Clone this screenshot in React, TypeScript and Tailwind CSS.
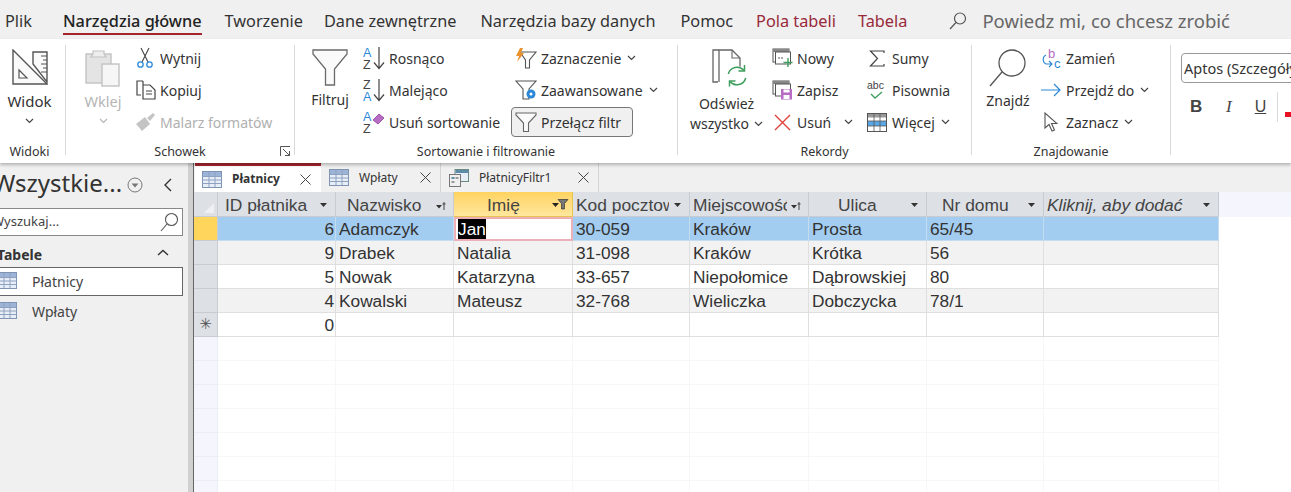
import React from 'react';

const ui = { fontFamily: '"Noto Sans", "Open Sans", sans-serif' };
const cellFont = { fontFamily: '"Liberation Sans", Arial, sans-serif' };

const Chevron = ({ className = '', color = '#444' }: { className?: string; color?: string }) => (
  <svg width="9" height="6" viewBox="0 0 9 6" className={className}>
    <path d="M1 1 L4.5 4.5 L8 1" fill="none" stroke={color} strokeWidth="1.2" />
  </svg>
);

const TableIcon = ({ w = 20, h = 17 }: { w?: number; h?: number }) => (
  <svg width={w} height={h} viewBox="0 0 20 17" className="shrink-0">
    <rect x="0.5" y="0.5" width="19" height="16" fill="#e8eef8" stroke="#7f93b2" />
    <rect x="1" y="1" width="18" height="4" fill="#9db4d6" />
    <path d="M0.5 5.5H19.5M0.5 9H19.5M0.5 12.5H19.5M7 1V16M13 1V16" stroke="#8ea2c0" strokeWidth="1" />
  </svg>
);

const FunnelBig = () => (
  <svg width="36" height="38" viewBox="0 0 36 38">
    <path d="M1 1H35V5L22.5 20V36H13.5V20L1 5Z" fill="#fafafa" stroke="#6a6a6a" strokeWidth="1.3" />
  </svg>
);

const FunnelSmall = () => (
  <svg width="22" height="22" viewBox="0 0 22 22">
    <path d="M1 2H21V4L13.5 12V20.5H8.5V12L1 4Z" fill="#fafafa" stroke="#666" strokeWidth="1.1" />
  </svg>
);

const AZ = ({ top, bottom, topColor, bottomColor }: { top: string; bottom: string; topColor: string; bottomColor: string }) => (
  <svg width="22" height="24" viewBox="0 0 22 24">
    <text x="0" y="10.5" fontSize="12.5" fontFamily="Liberation Sans" fill={topColor}>{top}</text>
    <text x="0" y="22.5" fontSize="12.5" fontFamily="Liberation Sans" fill={bottomColor}>{bottom}</text>
    <path d="M16 1V22M11 16.5L16 22.5L21 16.5" fill="none" stroke="#444" strokeWidth="1.2" />
  </svg>
);

const Small = ({ icon, label, chevron, disabled, w }: { icon: React.ReactNode; label: string; chevron?: boolean; disabled?: boolean; w?: string }) => (
  <div className={`flex h-8 items-center ${w ?? ''}`}>
    <div className="flex h-[22px] w-[22px] shrink-0 items-center justify-center">{icon}</div>
    <span className={`ml-[4px] whitespace-nowrap text-[14px] ${disabled ? 'text-[#b0b0b0]' : 'text-[#333]'}`}>{label}</span>
    {chevron && <Chevron className="ml-[6px]" />}
  </div>
);

const GroupLabel = ({ children, right = 'right-0' }: { children: React.ReactNode; right?: string }) => (
  <div className={`absolute bottom-[1px] left-0 text-center text-[12.5px] text-[#333] ${right}`}>{children}</div>
);

const Divider = () => <div className="mt-[6px] h-[110px] w-px shrink-0 bg-[#d9d9d9]" />;

const Tabs = [
  { label: 'Plik', cls: 'ml-[5px] text-[#333]' },
  { label: 'Narzędzia główne', cls: 'ml-[31px] font-medium text-[#222]', active: true },
  { label: 'Tworzenie', cls: 'ml-[23px] text-[#333]' },
  { label: 'Dane zewnętrzne', cls: 'ml-[21px] text-[#333]' },
  { label: 'Narzędzia bazy danych', cls: 'ml-[24px] text-[#333]' },
  { label: 'Pomoc', cls: 'ml-[25px] text-[#333]' },
  { label: 'Pola tabeli', cls: 'ml-[23px] text-[#98283a]' },
  { label: 'Tabela', cls: 'ml-[22px] text-[#98283a]' },
];

const TopBar = () => (
  <div className="flex h-[39px] items-start bg-[#f0f0f0]" style={ui}>
    {Tabs.map((t) => (
      <div key={t.label} className={`relative h-[39px] whitespace-nowrap pt-[8px] text-[16.3px] leading-[26px] ${t.cls}`}>
        {t.label}
        {t.active && <div className="absolute bottom-[4px] left-0 right-0 h-[2px] bg-[#a4262c]" />}
      </div>
    ))}
    <svg width="20" height="20" viewBox="0 0 20 20" className="ml-[41px] mt-[11px] shrink-0">
      <circle cx="12" cy="7.5" r="5.5" fill="none" stroke="#555" strokeWidth="1.2" />
      <path d="M8 11.5L2 18" stroke="#555" strokeWidth="1.2" />
    </svg>
    <div className="ml-[14px] whitespace-nowrap pt-[8px] text-[18.5px] leading-[26px] text-[#666]">Powiedz mi, co chcesz zrobić</div>
  </div>
);

const Ribbon = () => (
  <div className="relative z-10 flex h-[124px] overflow-hidden bg-white shadow-[0_2px_3px_rgba(0,0,0,0.25)]" style={ui}>
    {/* Widoki */}
    <div className="relative flex w-[65px] shrink-0 flex-col items-center pr-[6px] pt-[10px]">
      <svg width="36" height="36" viewBox="0 0 36 36">
        <path d="M1 1L35 35H1Z" fill="#fafafa" stroke="#555" strokeWidth="1.4" />
        <path d="M7 21L15 29H7Z" fill="#fff" stroke="#555" strokeWidth="1.2" />
        <path d="M21 15V3H35V33Z" fill="#fafafa" stroke="#555" strokeWidth="1.4" />
        <path d="M29 7H35M31 11H35M29 15H35M31 19H35M29 23H35" stroke="#555" strokeWidth="1.1" />
      </svg>
      <div className="mt-[4px] text-[15px] leading-[24px] text-[#333]">Widok</div>
      <Chevron className="mt-[5px]" />
      <GroupLabel right="right-[6px]">Widoki</GroupLabel>
    </div>
    <Divider />
    {/* Schowek */}
    <div className="relative flex w-[228px] shrink-0 pl-[11px]">
      <div className="flex w-[52px] flex-col items-center pt-[10px] text-[#b5b5b5]">
        <svg width="36" height="38" viewBox="0 0 36 38">
          <rect x="1" y="5" width="25" height="29" fill="#e4e4e4" stroke="#c2c2c2" strokeWidth="1.4" />
          <path d="M8 5V2H19V5L21 8H6Z" fill="#eee" stroke="#c2c2c2" strokeWidth="1.2" />
          <rect x="17" y="15" width="17" height="22" fill="#f6f6f6" stroke="#c2c2c2" strokeWidth="1.4" />
        </svg>
        <div className="mt-[2px] text-[14.5px] leading-[24px]">Wklej</div>
        <Chevron className="mt-[5px]" color="#b5b5b5" />
      </div>
      <div className="ml-[5px] mt-[3px] flex flex-col">
        <Small
          label="Wytnij"
          icon={
            <svg width="18" height="22" viewBox="0 0 18 22">
              <path d="M5 1L12 15M13 1L6 15" stroke="#444" strokeWidth="1.1" fill="none" />
              <circle cx="4.5" cy="17.5" r="2.7" fill="none" stroke="#2b88d8" strokeWidth="1.3" />
              <circle cx="13.5" cy="17.5" r="2.7" fill="none" stroke="#2b88d8" strokeWidth="1.3" />
            </svg>
          }
        />
        <Small
          label="Kopiuj"
          icon={
            <svg width="21" height="20" viewBox="0 0 21 20">
              <path d="M8 1H2V15H6" fill="none" stroke="#444" strokeWidth="1.2" />
              <path d="M8 1V3M8 5H15L20 10V19H8V3" fill="#fff" stroke="#444" strokeWidth="1.2" />
              <path d="M11 11H17M11 14H17" stroke="#444" strokeWidth="1" />
            </svg>
          }
        />
        <Small
          label="Malarz formatów"
          disabled
          icon={
            <svg width="21" height="20" viewBox="0 0 21 20">
              <path d="M1 12L10 5L15 12L7 19Z" fill="#c4c4c4" />
              <path d="M12 6L18 1L20 3L15 9Z" fill="#c4c4c4" />
            </svg>
          }
        />
      </div>
      <GroupLabel>Schowek</GroupLabel>
      <svg width="11" height="11" viewBox="0 0 11 11" className="absolute bottom-[6px] right-[3px]">
        <path d="M0.5 10V0.5H10M3 3L9.5 9.5M9.5 5V9.5H5" fill="none" stroke="#555" strokeWidth="1" />
      </svg>
    </div>
    <Divider />
    {/* Sortowanie */}
    <div className="relative flex w-[382px] shrink-0 pl-[17px]">
      <div className="flex w-[36px] flex-col items-center pt-[10px]">
        <FunnelBig />
        <div className="mt-[1px] text-[14px] leading-[24px] text-[#333]">Filtruj</div>
      </div>
      <div className="ml-[15px] mt-[3px] flex w-[152px] shrink-0 flex-col">
        <Small label="Rosnąco" icon={<AZ top="A" bottom="Z" topColor="#2b88d8" bottomColor="#444" />} />
        <Small label="Malejąco" icon={<AZ top="Z" bottom="A" topColor="#444" bottomColor="#2b88d8" />} />
        <Small
          label="Usuń sortowanie"
          icon={
            <svg width="22" height="24" viewBox="0 0 22 24">
              <text x="0" y="10.5" fontSize="12.5" fontFamily="Liberation Sans" fill="#2b88d8">A</text>
              <text x="0" y="22.5" fontSize="12.5" fontFamily="Liberation Sans" fill="#444">Z</text>
              <path d="M10 10L16 4L21 8L15 14Z" fill="#b86cc4" stroke="#8a3d99" strokeWidth="0.8" />
            </svg>
          }
        />
      </div>
      <div className="mt-[3px] flex flex-col">
        <Small
          label="Zaznaczenie"
          chevron
          icon={
            <svg width="22" height="22" viewBox="0 0 22 22">
              <path d="M5 5H21L14.5 13V21H10.5V13Z" fill="#fff" stroke="#555" strokeWidth="1.1" />
              <path d="M5 1L1 9H4L2 15L9 6H6L8 1Z" fill="#e8912d" />
            </svg>
          }
        />
        <Small
          label="Zaawansowane"
          chevron
          icon={
            <svg width="22" height="22" viewBox="0 0 22 22">
              <path d="M1 2H21L14 10V20H8V10Z" fill="#fff" stroke="#555" strokeWidth="1.1" />
              <circle cx="16" cy="15" r="4.5" fill="#2b88d8" />
              <circle cx="16" cy="15" r="1.5" fill="#fff" />
            </svg>
          }
        />
        <div className="-ml-[4px] mt-[1px] flex h-[30px] w-[122px] items-center rounded-[4px] border border-[#777] bg-[#f0f0f0] pl-[3px]">
          <FunnelSmall />
          <span className="ml-[4px] whitespace-nowrap text-[14px] text-[#333]">Przełącz filtr</span>
        </div>
      </div>
      <GroupLabel>Sortowanie i filtrowanie</GroupLabel>
    </div>
    <Divider />
    {/* Rekordy */}
    <div className="relative flex w-[293px] shrink-0 pl-[4px]">
      <div className="flex w-[89px] shrink-0 flex-col items-center pt-[10px]">
        <svg width="36" height="38" viewBox="0 0 36 38" className="ml-[6px]">
          <path d="M7 1H1V33H6" fill="none" stroke="#666" strokeWidth="1.3" />
          <path d="M7 33V1H20L28 9V18" fill="none" stroke="#666" strokeWidth="1.3" />
          <path d="M20 1V9H28" fill="none" stroke="#666" strokeWidth="1.1" />
          <circle cx="25" cy="27" r="10" fill="#fff" />
          <path d="M16.3 25A9 9 0 0 1 32 21.5M33.7 29A9 9 0 0 1 18 32.5" fill="none" stroke="#3f9e5d" strokeWidth="1.5" />
          <path d="M32.5 16V22H26.5M17.5 37.5V32H23.5" fill="none" stroke="#3f9e5d" strokeWidth="1.5" />
        </svg>
        <div className="mt-[7px] text-[14px] leading-[20px] text-[#333]">Odśwież</div>
        <div className="flex items-center text-[14px] leading-[20px] text-[#333]">
          wszystko
          <Chevron className="ml-[5px]" />
        </div>
      </div>
      <div className="mt-[3px] flex w-[95px] shrink-0 flex-col">
        <Small
          label="Nowy"
          icon={
            <svg width="21" height="20" viewBox="0 0 21 20">
              <rect x="1" y="1" width="16" height="13" fill="#fff" stroke="#555" />
              <rect x="1" y="1" width="16" height="3" fill="#888" />
              <rect x="3.5" y="4" width="15" height="12" fill="#fff" stroke="#555" />
              <path d="M6 10H12" stroke="#555" strokeDasharray="2 1" />
              <path d="M16 10V19M11.5 14.5H20.5" stroke="#3f9e5d" strokeWidth="1.4" />
            </svg>
          }
        />
        <Small
          label="Zapisz"
          icon={
            <svg width="21" height="20" viewBox="0 0 21 20">
              <rect x="1" y="1" width="16" height="13" fill="#fff" stroke="#555" />
              <rect x="1" y="1" width="16" height="3" fill="#888" />
              <rect x="3.5" y="4" width="15" height="12" fill="#fff" stroke="#555" />
              <rect x="9" y="9" width="11" height="10.5" fill="#b86cc4" />
              <rect x="11.5" y="9.5" width="6" height="3" fill="#fff" />
              <rect x="11.5" y="15" width="6" height="4" fill="#fff" />
            </svg>
          }
        />
        <div className="flex h-8 items-center">
          <div className="flex h-[22px] w-[22px] shrink-0 items-center justify-center">
            <svg width="17" height="17" viewBox="0 0 17 17">
              <path d="M1 1L16 16M16 1L1 16" stroke="#e0413a" strokeWidth="1.4" />
            </svg>
          </div>
          <span className="ml-[4px] text-[14px] text-[#333]">Usuń</span>
          <Chevron className="ml-[13px]" />
        </div>
      </div>
      <div className="mt-[3px] flex flex-col">
        <Small
          label="Sumy"
          icon={<svg width="17" height="17" viewBox="0 0 17 17"><path d="M15 3V1H1.5L8.5 8.5L1.5 16H15V14" fill="none" stroke="#444" strokeWidth="1.2" /></svg>}
        />
        <Small
          label="Pisownia"
          icon={
            <svg width="20" height="22" viewBox="0 0 20 22">
              <text x="0" y="10" fontSize="10.5" fontFamily="Liberation Sans" fill="#444">abc</text>
              <path d="M4 15L8 19L15 13" fill="none" stroke="#3f9e5d" strokeWidth="1.3" />
            </svg>
          }
        />
        <Small
          label="Więcej"
          chevron
          icon={
            <svg width="20" height="19" viewBox="0 0 20 19">
              <rect x="0.5" y="0.5" width="19" height="18" fill="#fff" stroke="#555" />
              <rect x="1" y="1" width="18" height="3.5" fill="#999" />
              <rect x="1" y="8" width="18" height="5" fill="#5ba6e4" />
              <path d="M7 1V18M13 1V18M1 8H19M1 13H19" stroke="#555" strokeWidth="0.8" />
            </svg>
          }
        />
      </div>
      <GroupLabel>Rekordy</GroupLabel>
    </div>
    <Divider />
    {/* Znajdowanie */}
    <div className="relative flex w-[198px] shrink-0 pl-[13px]">
      <div className="flex w-[46px] shrink-0 flex-col items-center pt-[10px]">
        <svg width="38" height="38" viewBox="0 0 38 38">
          <circle cx="23" cy="14" r="13" fill="#fff" stroke="#555" strokeWidth="1.3" />
          <path d="M13 23L1 37" stroke="#555" strokeWidth="1.3" />
        </svg>
        <div className="mt-[4px] text-[14px] leading-[20px] text-[#333]">Znajdź</div>
      </div>
      <div className="ml-[9px] mt-[3px] flex flex-col">
        <Small
          label="Zamień"
          icon={
            <svg width="21" height="23" viewBox="0 0 21 23">
              <text x="7" y="11" fontSize="13" fontFamily="Liberation Sans" fill="#b06cc0">b</text>
              <text x="13" y="21" fontSize="13" fontFamily="Liberation Sans" fill="#2b88d8">c</text>
              <path d="M5 8A5 5 0 0 0 5 17H11M8 14L11 17L8 20" fill="none" stroke="#2b88d8" strokeWidth="1.1" />
            </svg>
          }
        />
        <Small
          label="Przejdź do"
          chevron
          icon={<svg width="20" height="14" viewBox="0 0 20 14"><path d="M0 7H19M13 1L19 7L13 13" fill="none" stroke="#2b88d8" strokeWidth="1.2" /></svg>}
        />
        <Small
          label="Zaznacz"
          chevron
          icon={<svg width="14" height="20" viewBox="0 0 14 20"><path d="M1 1V16L5 12.5L8 19L10.5 18L7.5 11.5H13Z" fill="#fff" stroke="#555" strokeWidth="1.1" /></svg>}
        />
      </div>
      <GroupLabel>Znajdowanie</GroupLabel>
    </div>
    <Divider />
    {/* Formatowanie */}
    <div className="flex min-w-0 flex-1 flex-col pl-[10px] pt-[14px]">
      <div className="h-[30px] w-[130px] shrink-0 overflow-hidden whitespace-nowrap rounded-l-[4px] border border-[#999] pl-[2px] text-[14.5px] leading-[28px] text-[#333]">
        Aptos (Szczegóły)
      </div>
      <div className="mt-[9px] flex items-center text-[#444]">
        <span className="ml-[9px] w-[11px] text-[17px] font-bold leading-[28px]" style={cellFont}>B</span>
        <span className="ml-[25px] w-[6px] text-[17px] italic leading-[28px]" style={{ fontFamily: '"Liberation Serif", serif' }}>I</span>
        <span className="ml-[23px] text-[16px] underline leading-[28px]" style={cellFont}>U</span>
        <div className="ml-[11px] h-[30px] w-px bg-[#d9d9d9]" />
        <div className="ml-[7px] mt-[14px] h-[5px] w-[10px] bg-[#e81123]" />
      </div>
    </div>
  </div>
);

const NavPane = () => (
  <div className="w-[188px] shrink-0 overflow-hidden bg-[#f0f0f0]" style={ui}>
    <div className="flex h-[45px] items-center">
      <span className="-ml-[7px] -mt-[5px] whitespace-nowrap text-[24px] leading-[32px] text-[#333]">Wszystkie...</span>
      <svg width="16" height="16" viewBox="0 0 16 16" className="-mt-[2px] ml-[5px] shrink-0">
        <circle cx="8" cy="8" r="7" fill="none" stroke="#777" />
        <path d="M4.5 6.5H11.5L8 10.5Z" fill="#777" />
      </svg>
      <svg width="9" height="14" viewBox="0 0 9 14" className="-mt-[2px] ml-[20px] shrink-0">
        <path d="M8 1L2 7L8 13" fill="none" stroke="#333" strokeWidth="1.4" />
      </svg>
    </div>
    <div className="-ml-[1px] flex h-[28px] w-[184px] items-center justify-between border border-[#888] bg-white">
      <span className="-ml-[8px] text-[13px] text-[#444]">Wyszukaj...</span>
      <svg width="20" height="20" viewBox="0 0 20 20" className="mr-[3px]">
        <circle cx="12.5" cy="7.5" r="6" fill="none" stroke="#555" strokeWidth="1.1" />
        <path d="M8 12L2 19" stroke="#555" strokeWidth="1.1" />
      </svg>
    </div>
    <div className="flex h-[31px] items-center justify-between pr-[19px] pt-[6px]">
      <span className="-ml-[3px] text-[14px] font-bold text-[#333]">Tabele</span>
      <svg width="12" height="7" viewBox="0 0 12 7" className="-mt-[4px]">
        <path d="M1 6L6 1.5L11 6" fill="none" stroke="#333" strokeWidth="1.4" />
      </svg>
    </div>
    <div className="-ml-[1px] flex h-[29px] w-[184px] items-center border border-[#666] bg-white">
      <div className="-ml-[3px] -mt-[2px]"><TableIcon /></div>
      <span className="ml-[15px] text-[14px] text-[#444]">Płatnicy</span>
    </div>
    <div className="flex h-[31px] items-center">
      <div className="-ml-[3px] -mt-[2px]"><TableIcon /></div>
      <span className="ml-[15px] text-[14px] text-[#444]">Wpłaty</span>
    </div>
  </div>
);

const DocTab = ({ label, active, icon, w, gap, pad, close }: { label: string; active?: boolean; icon: React.ReactNode; w: string; gap: string; pad: string; close: string }) => (
  <div className={`flex h-[29px] shrink-0 items-center ${pad} ${w} ${active ? 'border-t-[3px] border-[#a4262c] bg-white font-bold' : 'border-r border-[#d4d4d4] bg-[#f0f0f0]'}`}>
    {icon}
    <span className={`${gap} whitespace-nowrap text-[12px] text-[#333]`}>{label}</span>
    <svg width="11" height="11" viewBox="0 0 11 11" className={`ml-auto shrink-0 ${close}`}>
      <path d="M0.5 0.5L10.5 10.5M10.5 0.5L0.5 10.5" stroke="#444" strokeWidth="1" />
    </svg>
  </div>
);

const cols = ['w-[118px]', 'w-[118px]', 'w-[119px]', 'w-[117px]', 'w-[119px]', 'w-[118px]', 'w-[117px]', 'w-[175px]'];

const sortArrow = (
  <svg width="10" height="10" viewBox="0 0 10 10" className="absolute right-[7px] top-[9px]">
    <path d="M0 4H6L3 7.5Z" fill="#333" />
    <path d="M8 1V9M6.5 3H9.5" stroke="#333" strokeWidth="0.9" />
  </svg>
);
const dropArrow = (
  <svg width="7" height="4" viewBox="0 0 7 4" className="absolute right-[8px] top-[11px]">
    <path d="M0 0H7L3.5 4Z" fill="#333" />
  </svg>
);

const headers = [
  { t: 'ID płatnika', a: dropArrow, cls: 'pl-[7px]' },
  { t: 'Nazwisko', a: sortArrow, cls: 'pl-[11px]' },
  { t: 'Imię', a: null, cls: 'pl-[33px]' },
  { t: 'Kod pocztowy', a: dropArrow, cls: 'pl-[3px]' },
  { t: 'Miejscowość', a: sortArrow, cls: 'pl-[3px]' },
  { t: 'Ulica', a: dropArrow, cls: 'pl-[29px]' },
  { t: 'Nr domu', a: dropArrow, cls: 'pl-[15px]' },
  { t: 'Kliknij, aby dodać', a: dropArrow, cls: 'pl-[3px] italic' },
];

const rows = [
  ['6', 'Adamczyk', 'Jan', '30-059', 'Kraków', 'Prosta', '65/45', ''],
  ['9', 'Drabek', 'Natalia', '31-098', 'Kraków', 'Krótka', '56', ''],
  ['5', 'Nowak', 'Katarzyna', '33-657', 'Niepołomice', 'Dąbrowskiej', '80', ''],
  ['4', 'Kowalski', 'Mateusz', '32-768', 'Wieliczka', 'Dobczycka', '78/1', ''],
  ['0', '', '', '', '', '', '', ''],
];

const Datasheet = () => (
  <div className="min-w-0 flex-1 overflow-hidden bg-white" style={cellFont}>
    {/* header */}
    <div className="flex h-[25px] bg-[#f5f6fd]">
      <div className="relative h-full w-[24px] shrink-0 border-r border-b border-[#c8ccd2] bg-[#dde1e6]">
        <svg width="12" height="12" viewBox="0 0 12 12" className="absolute bottom-[2px] right-[2px]">
          <path d="M11 1V11H1Z" fill="#eef0f3" />
        </svg>
      </div>
      {headers.map((h, i) => (
        <div
          key={h.t}
          className={`relative h-full shrink-0 overflow-hidden whitespace-nowrap border-r border-b text-[17.4px] leading-[26px] text-[#444] ${cols[i]} ${h.cls} ${
            i === 2 ? 'border-[#e8c450] bg-gradient-to-b from-[#ffd35e] to-[#ffe79d]' : 'border-[#c8ccd2] bg-[#dde1e6]'
          }`}
        >
          <div className={i === 3 ? 'w-[93px] overflow-hidden' : i === 4 ? 'w-[94px] overflow-hidden' : ''}>{h.t}</div>
          {h.a}
          {i === 2 && (
            <svg width="17" height="11" viewBox="0 0 17 11" className="absolute right-[3px] top-[7px]">
              <path d="M0 4H7L3.5 8Z" fill="#222" />
              <path d="M6 0.5H16L12.5 4.5V10H9.5V4.5Z" fill="#777" stroke="#333" strokeWidth="0.7" />
            </svg>
          )}
        </div>
      ))}
    </div>
    {/* data */}
    {rows.map((row, r) => (
      <div key={r} className="flex h-[24px]">
        <div className={`flex h-full w-[24px] shrink-0 items-center justify-center border-r border-b border-[#c8ccd2] ${r === 0 ? 'bg-[#ffd55c]' : 'bg-[#dde1e6]'}`}>
          {r === 4 && <span className="text-[15px] leading-none text-[#555]" style={{ fontFamily: '"DejaVu Sans", sans-serif' }}>✳</span>}
        </div>
        {row.map((c, i) => {
          const bg = r === 0 ? 'bg-[#a3cdf0]' : r === 1 || r === 3 ? 'bg-[#f2f2f2]' : 'bg-white';
          if (r === 0 && i === 2) {
            return (
              <div key={i} className={`h-full shrink-0 border-2 border-[#eeb0b8] bg-white pl-[2px] text-[17.3px] leading-[20px] text-white ${cols[i]}`}>
                <span className="inline-block bg-black">{c}</span>
              </div>
            );
          }
          return (
            <div
              key={i}
              className={`h-full shrink-0 overflow-hidden whitespace-nowrap border-r border-b text-[17.3px] leading-[25px] text-[#333] ${cols[i]} ${bg} ${
                r === 0 ? 'border-[#c4dcf0]' : 'border-[#dfdfdf]'
              } ${i === 0 ? 'pr-[1px] text-right' : 'pl-[3px]'}`}
            >
              {c}
            </div>
          );
        })}
      </div>
    ))}
    {/* empty grid */}
    {Array.from({ length: 7 }).map((_, r) => (
      <div key={r} className="flex h-[24px]">
        <div className="h-full w-[24px] shrink-0 border-r border-b border-[#eceef6] bg-[#f5f6fd]" />
        {cols.map((c, i) => (
          <div key={i} className={`h-full shrink-0 border-r border-b border-[#f6f7f9] ${c}`} />
        ))}
      </div>
    ))}
  </div>
);

export default function App() {
  return (
    <div className="flex h-[492px] w-[1291px] flex-col overflow-hidden bg-white">
      <TopBar />
      <Ribbon />
      <div className="flex min-h-0 flex-1">
        <NavPane />
        <div className="w-[5px] shrink-0 bg-[#d0d0d0]" />
        <div className="flex min-w-0 flex-1 flex-col border-l border-[#666]">
          <div className="flex h-[29px] shrink-0 bg-[#f0f0f0] pl-[1px]" style={ui}>
            <DocTab label="Płatnicy" active w="w-[126px]" pad="pl-[7px]" gap="ml-[10px]" close="mr-[10px]" icon={<TableIcon />} />
            <DocTab label="Wpłaty" w="w-[120px]" pad="pl-[8px]" gap="ml-[10px]" close="mr-[9px]" icon={<TableIcon />} />
            <DocTab
              label="PłatnicyFiltr1"
              w="w-[158px]"
              pad="pl-[8px]"
              gap="ml-[10px]"
              close="mr-[9px]"
              icon={
                <svg width="20" height="18" viewBox="0 0 20 18" className="shrink-0">
                  <rect x="6" y="0.5" width="13.5" height="12" fill="#e8eef8" stroke="#6d8a7f" />
                  <rect x="6.5" y="1" width="13" height="3" fill="#5d8ca8" />
                  <rect x="0.5" y="5.5" width="11" height="12" fill="#f0f0f0" stroke="#777" />
                  <rect x="2.5" y="8" width="3" height="2" fill="#5d8ca8" />
                  <rect x="6.5" y="8" width="3" height="2" fill="#999" />
                  <rect x="2.5" y="12" width="3" height="2" fill="#999" />
                </svg>
              }
            />
          </div>
          <Datasheet />
        </div>
      </div>
    </div>
  );
}
